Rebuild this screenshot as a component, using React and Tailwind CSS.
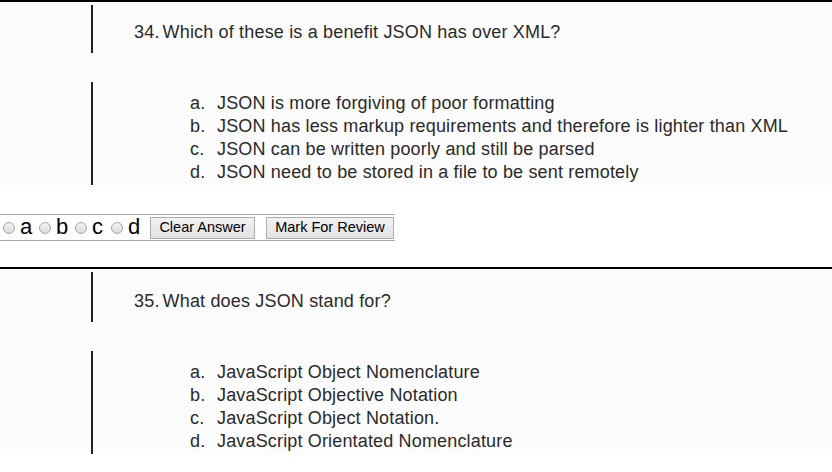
const questions = [
  {
    num: 34,
    text: "Which of these is a benefit JSON has over XML?",
    options: [
      "JSON is more forgiving of poor formatting",
      "JSON has less markup requirements and therefore is lighter than XML",
      "JSON can be written poorly and still be parsed",
      "JSON need to be stored in a file to be sent remotely",
    ],
  },
  {
    num: 35,
    text: "What does JSON stand for?",
    options: [
      "JavaScript Object Nomenclature",
      "JavaScript Objective Notation",
      "JavaScript Object Notation.",
      "JavaScript Orientated Nomenclature",
    ],
  },
];

const letters = ["a", "b", "c", "d"];

function Radio() {
  return (
    <span className="inline-block w-[12px] h-[12px] rounded-full border border-[#a5a5a5] bg-gradient-to-b from-[#f4f4f4] to-[#dcdcdc] shrink-0" />
  );
}

function AnswerRow() {
  return (
    <div className="w-[395px] h-[27px] border-t border-b border-[#a8a8a8] flex items-center pl-[3px] font-['Liberation_Sans',Arial,sans-serif]">
      {letters.map((l) => (
        <div key={l} className="flex items-center w-[36px]">
          <Radio />
          <span className="text-[22px] leading-none text-black ml-[5px] -mt-[2px]">{l}</span>
        </div>
      ))}
      <button className="ml-[3px] h-[22px] w-[105px] border border-[#adadad] bg-gradient-to-b from-[#f2f2f2] to-[#e2e2e2] text-[14.5px] text-black leading-none">
        Clear Answer
      </button>
      <button className="ml-[11px] h-[22px] w-[128px] border border-[#adadad] bg-gradient-to-b from-[#f2f2f2] to-[#e2e2e2] text-[14.5px] text-black leading-none">
        Mark For Review
      </button>
    </div>
  );
}

function Question({ q, last }) {
  return (
    <div className="border-t-2 border-black">
      <div className="bg-[#fcfcfc] text-[#2a2a2a] font-['Liberation_Sans',Arial,sans-serif]">
        <div className="flex pt-[3px]">
          <div className={`ml-[91px] w-[2px] bg-[#222] ${last ? "h-[50px]" : "h-[48px]"}`} />
          <div className={`ml-[41px] text-[18px] leading-[20px] tracking-[0.17px] ${last ? "pt-[19px]" : "pt-[17px]"}`}>
            <span className="mr-[3px]">{q.num}.</span>
            {q.text}
          </div>
        </div>
        <div className="flex mt-[29px]">
          <div className="ml-[91px] w-[2px] h-[103px] bg-[#222]" />
          <ol className="ml-[97px] pt-[10px] text-[18px] leading-[23px] tracking-[0.16px]">
            {q.options.map((o, i) => (
              <li key={i} className="flex">
                <span className="w-[27px]">{letters[i]}.</span>
                <span>{o}</span>
              </li>
            ))}
          </ol>
        </div>
      </div>
      {!last && (
        <>
          <div className="h-[29px] bg-white" />
          <AnswerRow />
          <div className="h-[26px]" />
        </>
      )}
    </div>
  );
}

export default function App() {
  return (
    <div className="w-[832px] h-[472px] overflow-hidden bg-white">
      {questions.map((q, i) => (
        <Question key={q.num} q={q} last={i === questions.length - 1} />
      ))}
    </div>
  );
}
